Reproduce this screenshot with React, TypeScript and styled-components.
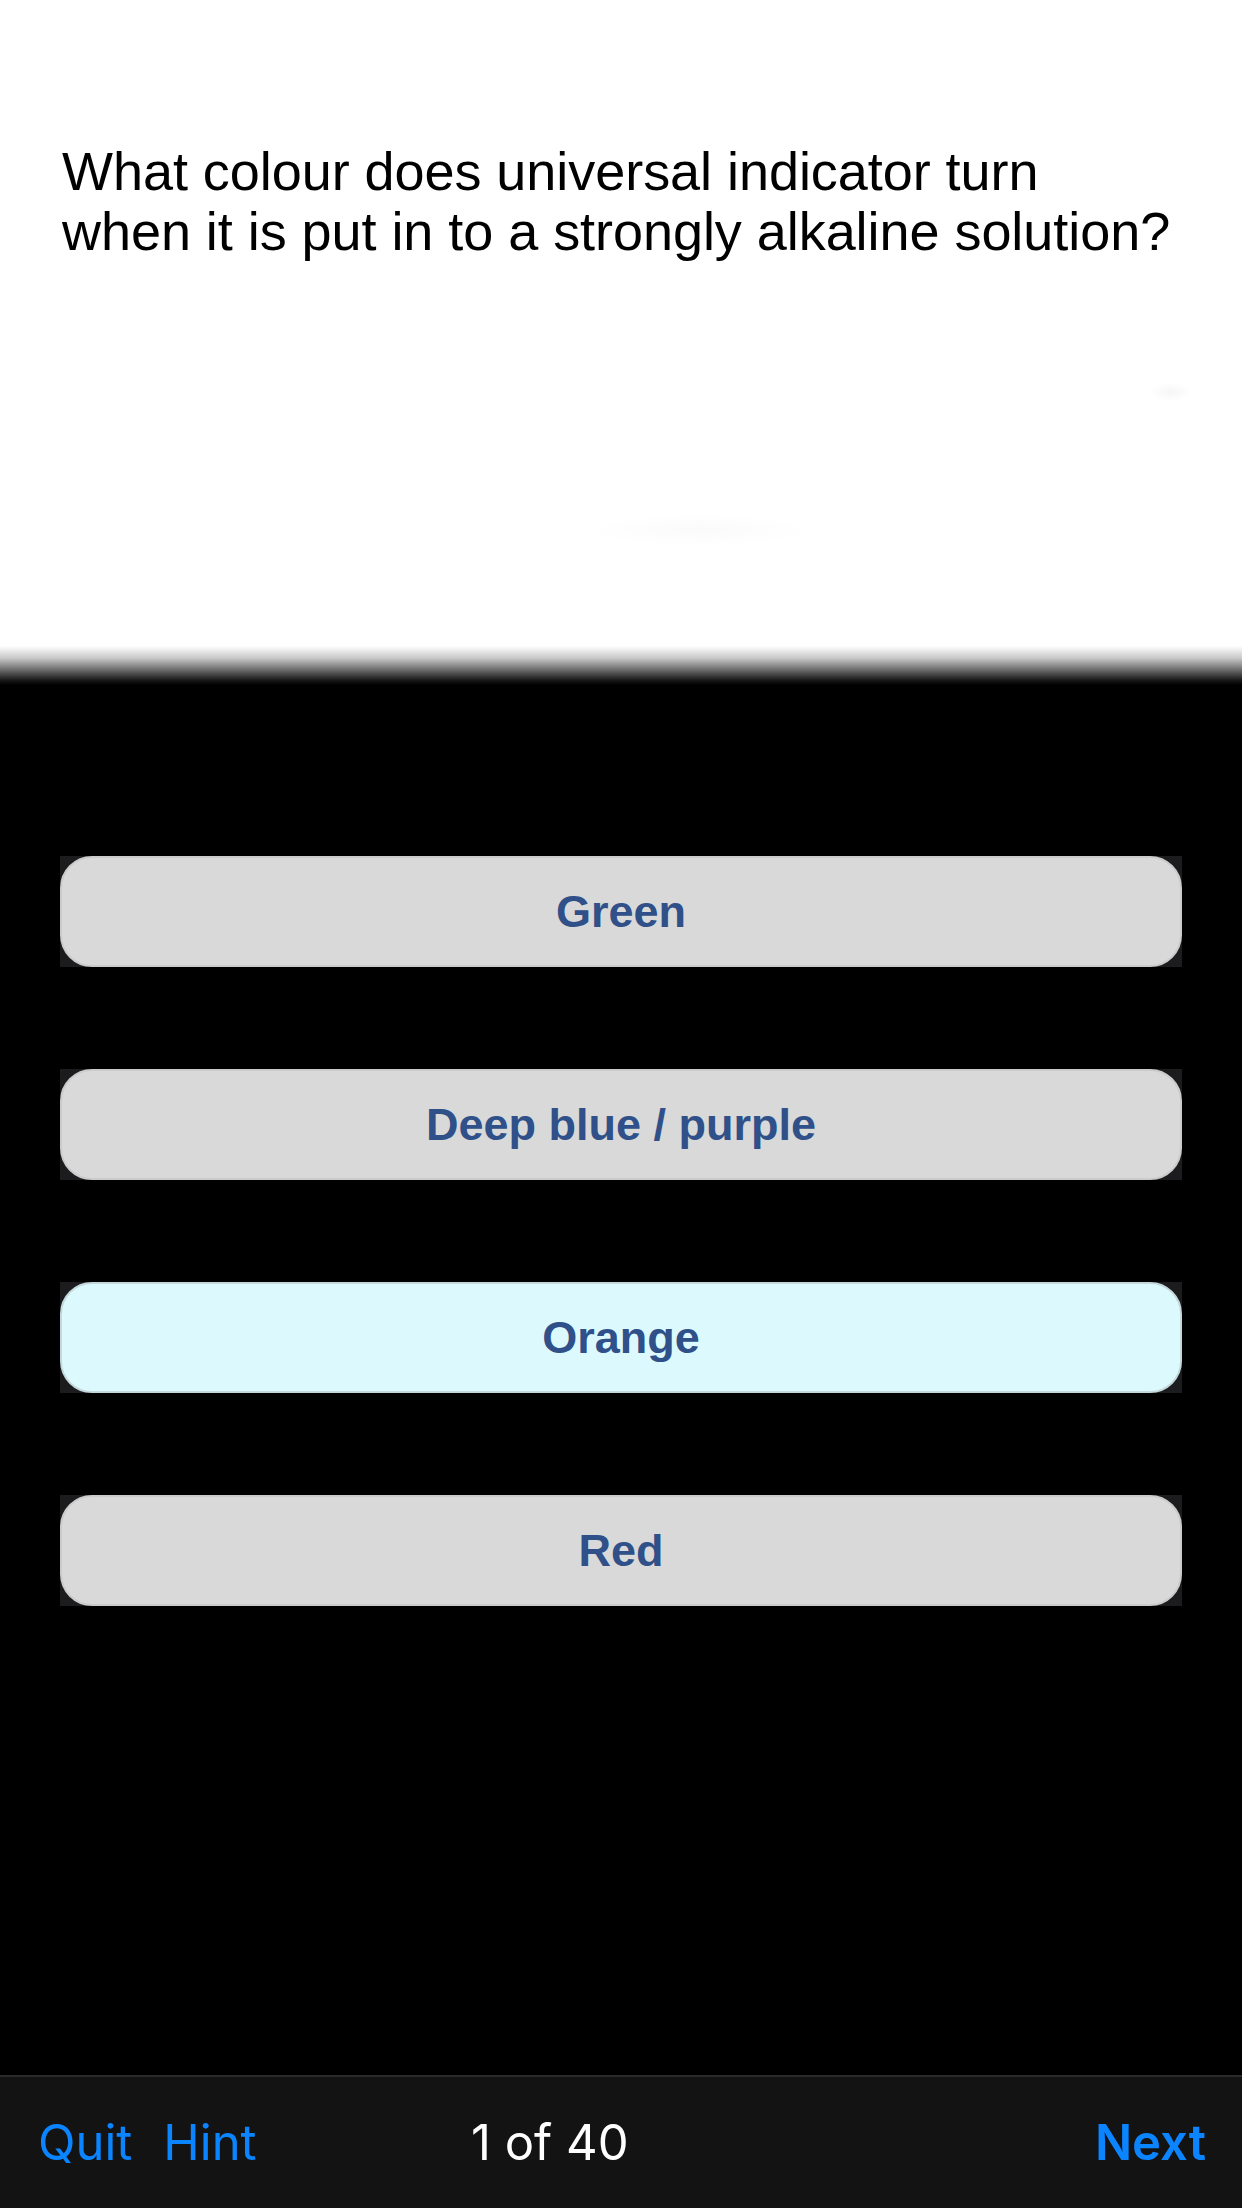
import React from "react";
import styled, { createGlobalStyle } from "styled-components";

const GlobalStyle = createGlobalStyle`
  html, body { margin: 0; padding: 0; background: #000; }
  #root { width: 1242px; height: 2208px; }
`;

const Screen = styled.div`
  width: 1242px;
  height: 2208px;
  display: flex;
  flex-direction: column;
  background: #000;
  overflow: hidden;
`;

const QuestionPanel = styled.div`
  height: 685px;
  flex: 0 0 auto;
  box-sizing: border-box;
  padding: 141px 40px 0 62px;
  background:
    radial-gradient(ellipse 160px 22px at 700px 530px, rgba(0,0,0,0.02), transparent 70%),
    radial-gradient(ellipse 30px 14px at 1170px 392px, rgba(0,0,0,0.035), transparent 70%),
    linear-gradient(to bottom, #ffffff 0px, #ffffff 646px, #c9c9c9 658px, #6a6a6a 670px, #1a1a1a 680px, #000 685px);
`;

const QuestionText = styled.p`
  margin: 0;
  font-family: "Liberation Sans", Arial, sans-serif;
  font-size: 54px;
  line-height: 60px;
  letter-spacing: -0.05px;
  color: #000;
  max-width: 1120px;
`;

const Answers = styled.div`
  flex: 1 1 auto;
  display: flex;
  flex-direction: column;
  gap: 102px;
  padding: 171px 60px 0 60px;
`;

const AnswerSlot = styled.div`
  height: 111px;
  background: #1c1c1e;
`;

const AnswerButton = styled.button<{ $selected?: boolean }>`
  width: 100%;
  height: 100%;
  box-sizing: border-box;
  display: flex;
  align-items: center;
  justify-content: center;
  border-radius: 32px;
  border: 2px solid ${(p) => (p.$selected ? "#c4d8db" : "#cbcbcb")};
  background: ${(p) => (p.$selected ? "#dcfafe" : "#d9d9d9")};
  font-family: "Liberation Sans", Arial, sans-serif;
  font-weight: 700;
  font-size: 45px;
  color: #2f5088;
  padding: 0;
  cursor: pointer;
`;

const BottomBar = styled.div`
  height: 133px;
  flex: 0 0 auto;
  box-sizing: border-box;
  border-top: 2px solid #2a2a2a;
  background: #131313;
  display: grid;
  grid-template-columns: 433px auto 1fr auto;
  align-items: center;
  padding: 0 36px 0 38px;
  font-family: Inter, "Open Sans", sans-serif;
  font-size: 49px;
`;

const LeftGroup = styled.div`
  display: flex;
  gap: 31px;
`;

const BarLink = styled.span<{ $bold?: boolean }>`
  color: #0a84ff;
  font-weight: ${(p) => (p.$bold ? 600 : 400)};
`;

const Counter = styled.span`
  color: #ffffff;
  font-weight: 400;
`;

const answers = ["Green", "Deep blue / purple", "Orange", "Red"];

export default function App() {
  return (
    <>
      <GlobalStyle />
      <Screen>
        <QuestionPanel>
          <QuestionText>
            What colour does universal indicator turn
            <br />
            when it is put in to a strongly alkaline solution?
          </QuestionText>
        </QuestionPanel>
        <Answers>
          {answers.map((a) => (
            <AnswerSlot key={a}>
              <AnswerButton $selected={a === "Orange"}>{a}</AnswerButton>
            </AnswerSlot>
          ))}
        </Answers>
        <BottomBar>
          <LeftGroup>
            <BarLink>Quit</BarLink>
            <BarLink>Hint</BarLink>
          </LeftGroup>
          <Counter>1 of 40</Counter>
          <span />
          <BarLink $bold>Next</BarLink>
        </BottomBar>
      </Screen>
    </>
  );
}
